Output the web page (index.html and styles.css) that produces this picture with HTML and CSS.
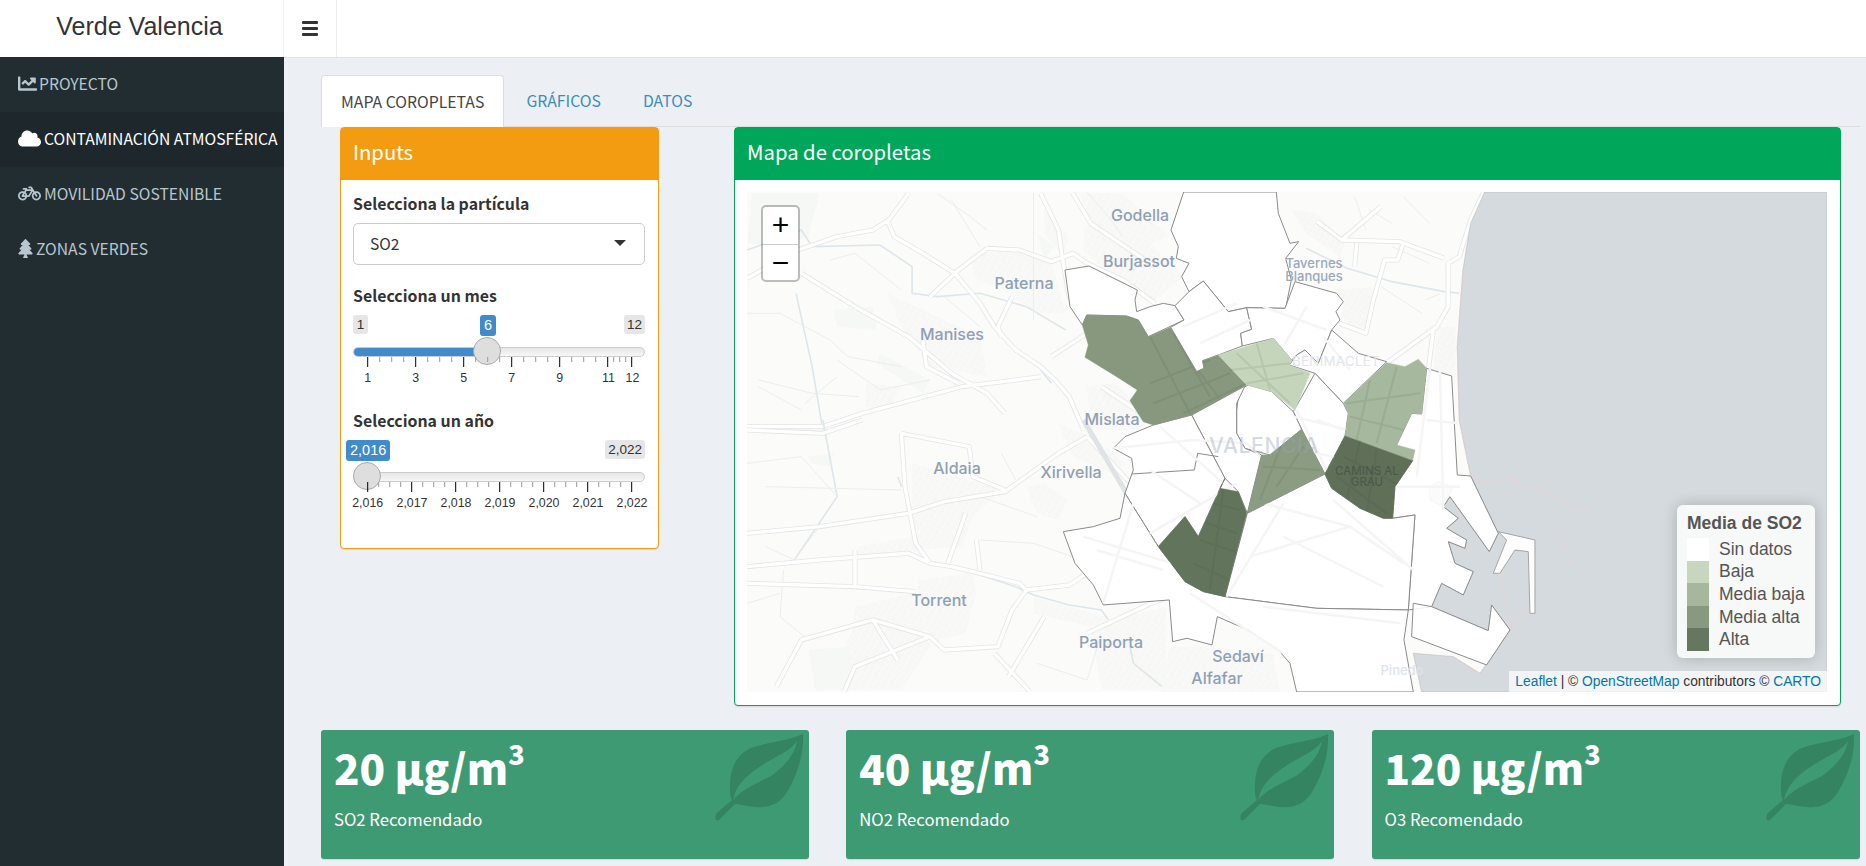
FILE: index.html
```html
<!DOCTYPE html>
<html lang="es">
<head>
<meta charset="utf-8">
<title>Verde Valencia</title>
<link rel="stylesheet" href="styles.css">
</head>
<body>
<header class="topbar">
  <div class="logo">Verde Valencia</div>
  <button class="toggle" aria-label="menu"><span></span><span></span><span></span></button>
</header>
<div class="shell">
  <aside class="sidebar">
    <a class="navitem"><svg class="ic ic-chart" viewBox="0 0 512 512"><path d="M496 384H64V80c0-8.840-7.160-16-16-16H16C7.160 64 0 71.160 0 80v336c0 17.670 14.330 32 32 32h464c8.840 0 16-7.160 16-16v-32c0-8.840-7.160-16-16-16zM464 96H345.940c-21.380 0-32.090 25.850-16.970 40.970l32.400 32.400L288 242.750l-73.370-73.370c-12.500-12.500-32.760-12.500-45.250 0l-68.690 68.690c-6.250 6.250-6.250 16.380 0 22.630l22.620 22.620c6.250 6.250 16.380 6.250 22.630 0L192 237.250l73.370 73.370c12.500 12.500 32.760 12.500 45.250 0l96-96 32.400 32.400c15.120 15.120 40.970 4.410 40.970-16.970V112c.01-8.840-7.150-16-16-16z"/></svg>PROYECTO</a>
    <a class="navitem active"><svg class="ic ic-wide" viewBox="0 0 640 512"><path d="M537.600 226.600c4.100-10.700 6.400-22.400 6.400-34.600 0-53-43-96-96-96-19.700 0-38.100 6-53.300 16.200C367 64.200 315.300 32 256 32c-88.400 0-160 71.600-160 160 0 2.700.1 5.400.2 8.100C40.200 219.800 0 273.200 0 336c0 79.500 64.500 144 144 144h368c70.700 0 128-57.300 128-128 0-61.900-44-113.600-102.400-125.400z"/></svg>CONTAMINACIÓN ATMOSFÉRICA</a>
    <a class="navitem"><svg class="ic ic-wide" viewBox="0 0 640 512"><path d="M512.509 192.001c-16.373-.064-32.030 2.955-46.436 8.495l-77.680-125.153A24 24 0 0 0 368.001 64h-64c-8.837 0-16 7.163-16 16v16c0 8.837 7.163 16 16 16h50.649l14.896 24H256.002v-16c0-8.837-7.163-16-16-16h-87.459c-13.441 0-24.777 10.999-24.536 24.437.232 13.044 10.876 23.563 23.995 23.563h48.726l-29.417 47.520c-13.433-4.830-27.904-7.483-42.992-7.520C58.094 191.830.412 249.012.002 319.236-.413 390.279 57.055 448 128.002 448c59.642 0 109.758-40.793 123.967-96h52.033a24 24 0 0 0 20.406-11.367L410.370 201.770l14.938 24.067c-25.455 23.448-41.385 57.081-41.307 94.437.145 68.833 57.899 127.051 126.729 127.719 70.606.685 128.181-55.803 129.255-125.996 1.086-70.941-56.526-129.720-127.476-129.996zM186.750 265.772c9.727 10.529 16.673 23.661 19.642 38.228h-43.306l23.664-38.228zM128.002 400c-44.112 0-80-35.888-80-80s35.888-80 80-80c5.869 0 11.585.653 17.099 1.859l-45.505 73.509C89.715 331.327 101.213 352 120.002 352h81.300c-12.370 28.225-40.562 48-73.300 48zm162.630-96h-35.624c-3.960-31.756-19.556-59.894-42.383-80.026L237.371 184h127.547l-74.286 120zm217.057 95.886c-41.036-2.165-74.049-35.692-75.627-76.755-.812-21.121 6.633-40.518 19.335-55.263l44.433 71.586c4.660 7.508 14.524 9.816 22.032 5.156l13.594-8.437c7.508-4.660 9.817-14.524 5.156-22.032l-44.468-71.643a79.901 79.901 0 0 1 19.858-2.497c44.112 0 80 35.888 80 80-.001 45.540-38.252 82.316-84.313 79.885z"/></svg>MOVILIDAD SOSTENIBLE</a>
    <a class="navitem"><svg class="ic ic-tree" viewBox="0 0 384 512"><path d="M378.310 378.490L298.420 288h30.630c9.010 0 16.980-5 20.780-13.060 3.800-8.040 2.550-17.260-3.280-24.050L268.420 160h28.890c9.100 0 17.300-5.350 20.860-13.610 3.520-8.130 1.860-17.590-4.240-24.080L203.660 4.830c-6.030-6.450-17.280-6.450-23.320 0L70.060 122.310c-6.100 6.490-7.750 15.950-4.240 24.080C69.380 154.650 77.590 160 86.690 160h28.890l-78.140 90.890c-5.810 6.780-7.060 15.990-3.270 24.040C37.970 283 45.930 288 54.950 288h30.630L5.690 378.490c-6 6.790-7.360 16.090-3.560 24.260 3.750 8.050 12 13.250 21 13.250H160v24.450l-30.290 48.400c-5.320 10.640 2.420 23.160 14.310 23.160h95.960c11.890 0 19.630-12.520 14.310-23.160L224 440.450V416h136.860c9 0 17.250-5.200 21-13.250 3.800-8.170 2.440-17.470-3.550-24.260z"/></svg>ZONAS VERDES</a>
  </aside>
  <main class="content">
    <nav class="tabs">
      <a class="tab current">MAPA COROPLETAS</a>
      <a class="tab">GRÁFICOS</a>
      <a class="tab">DATOS</a>
    </nav>
    <div class="toprow">
      <section class="box box-orange">
        <h3 class="box-title">Inputs</h3>
        <div class="box-body inputs">
          <label class="field-label">Selecciona la partícula</label>
          <div class="select"><span>SO2</span><i class="caret"></i></div>
          <label class="field-label label-mes">Selecciona un mes</label>
          <div class="slider">
            <span class="tag tag-min">1</span>
            <span class="tag tag-max">12</span>
            <span class="tag tag-val tag-6">6</span>
            <div class="track"><div class="fill"></div></div>
            <div class="handle handle-6"></div>
            <svg class="scale" viewBox="0 0 292 32">
              <path class="tk-min" d="M26.700 0v5M38.700 0v5M50.700 0v5M74.700 0v5M86.700 0v5M98.700 0v5M122.700 0v5M134.700 0v5M146.700 0v5M170.700 0v5M182.700 0v5M194.700 0v5M218.700 0v5M230.700 0v5M242.700 0v5M260.700 0v5M266.700 0v5M272.700 0v5"/>
              <path class="tk-maj" d="M14.700 0v10M62.700 0v10M110.700 0v10M158.700 0v10M206.700 0v10M254.700 0v10M278.700 0v10"/>
              <text x="14.700" y="25">1</text><text x="62.700" y="25">3</text><text x="110.700" y="25">5</text><text x="158.700" y="25">7</text><text x="206.700" y="25">9</text><text x="255.500" y="25">11</text><text x="279.500" y="25">12</text>
            </svg>
          </div>
          <label class="field-label label-ano">Selecciona un año</label>
          <div class="slider">
            <span class="tag tag-val tag-2016">2,016</span>
            <span class="tag tag-max">2,022</span>
            <div class="track"></div>
            <div class="handle handle-2016"></div>
            <svg class="scale scale-wide" viewBox="-8 0 308 32">
              <path class="tk-min" d="M25.700 0v5M36.700 0v5M47.700 0v5M69.700 0v5M80.700 0v5M91.700 0v5M113.700 0v5M124.700 0v5M135.700 0v5M157.700 0v5M168.700 0v5M179.700 0v5M201.700 0v5M212.700 0v5M223.700 0v5M245.700 0v5M256.700 0v5M267.700 0v5"/>
              <path class="tk-maj" d="M14.700 0v10M58.700 0v10M102.700 0v10M146.700 0v10M190.700 0v10M234.700 0v10M278.700 0v10"/>
              <text x="14.700" y="25">2,016</text><text x="59" y="25">2,017</text><text x="103" y="25">2,018</text><text x="147" y="25">2,019</text><text x="191" y="25">2,020</text><text x="235" y="25">2,021</text><text x="279" y="25">2,022</text>
            </svg>
          </div>
        </div>
      </section>
      <section class="box box-green">
        <h3 class="box-title">Mapa de coropletas</h3>
        <div class="box-body mapwrap">
          <div class="map">
            <svg class="mapsvg" viewBox="0 0 1080 500" width="1080" height="500">
              <defs>
                <pattern id="urb" width="17" height="17" patternUnits="userSpaceOnUse" patternTransform="rotate(28)"><path class="urbline" d="M0 0H17M0 6H17M0 12H17M0 0V17M8 0V17"/></pattern>
                <path id="r1" d="M48 295L190 210 300 170 400 150 445 120 500 40M440 120L460 170 540 220 630 280 700 370 740 440 800 510 870 560 910 600 950 650 990 750M720 205L810 210 900 245 960 220 1000 250 1100 300 1190 370M870 40L920 150 930 230 950 350 990 420M48 740L260 740 370 700 650 620 800 600 870 590M200 280L350 380 500 470 620 580 720 640 770 700M540 480L550 560 640 610M640 270L560 350M720 205L640 270M960 40L1010 130 1190 260M900 530L1000 460 1100 420M1040 620L1180 720M790 350L750 440 760 470"/>
                <path id="r2" d="M48 30L260 40 370 0M480 40L490 200 520 370 560 430 620 440 700 460 810 490 830 510 950 495 1000 460M48 440L250 420 500 400 560 430M48 340L250 320 500 280 600 245 770 215 920 100 1000 50M48 490L350 500 520 515M830 510L790 570 750 680 600 690 560 650 400 600 200 660 130 800M400 600L470 720M660 280L610 430M350 390V500M480 40L670 80 680 170 770 210M1000 640L1180 550 1230 530M690 360L700 450M560 650L350 740 320 815M740 700L840 815M880 590L780 770M1000 50L1130 200"/>
                <path id="r3" d="M545 37L510 120 480 230 450 250 450 380 420 440 290 545M100 125L165 180 320 185 440 235M205 190L200 260M330 190L315 240 280 240 250 360 230 460 160 430M165 180L270 80M410 450L395 590"/>
                <clipPath id="greens"><path d="M110 135L230 138 265 150 295 200 362 172 440 305 462 295 458 272 505 255 590 345 425 435 310 465 280 455 240 392 262 360 200 320 105 262 115 225 97 165zM505 255L670 205 725 270 718 285 780 310 735 420 665 365 590 345zM1010 278L1065 290 1105 268 1130 295 1115 432 1085 430 1040 525 1095 540 1088 572 885 498 895 430 885 405 880 400zM755 478L825 612 592 730 635 555 660 555zM885 498L1088 572 1035 650 1028 745 1000 745 930 715 845 655 825 612zM525 625L510 655 565 665 590 730 525 980 460 965 405 935 325 830 405 740 445 800z"/></clipPath>
              </defs>
              <rect class="land" width="1080" height="500"/>
              <g transform="translate(-17 -12) scale(.3571 .3333)">
                <path class="urban" d="M680 220L810 210 900 250 940 400 860 400 780 340 680 290zM440 340L700 470 720 590 560 560 470 420zM990 140L1090 100 1270 290 1180 370 1070 290 990 210zM980 40H1100L1230 170 1180 190 1020 150zM1000 620L1080 610 1180 720 1140 750H1010zM880 90L950 170 930 230 880 160zM380 610L480 620 440 690 380 680z"/>
                <path class="parkfield" d="M60 40L250 40 220 170 120 200 50 190zM290 390L400 380 410 450 300 440zM420 520L560 600 540 640 410 550zM860 160L910 200 880 240z"/>
                <path class="river" d="M48 210L200 150 230 200 420 195 510 260 510 340 580 350 700 340 830 380 940 450M185 340L230 560 260 750M870 570L900 610"/>
                <path class="field" d="M48 400L140 400 280 480 330 530 480 560M80 600L230 640 360 650M280 240L350 220 480 330M580 40L660 100 720 150M850 37V420M300 540L420 630 560 600M80 620L200 690M300 590L210 670M1000 37L1060 110 1100 170M620 60L700 200M600 350L700 440"/>
                <use class="casing" href="#r1"/>
                <use class="road" href="#r1"/>
              </g>
              <g transform="translate(-17 228) scale(.3571 .3333)">
                <path class="urban" d="M510 130L760 210 680 290 650 380 530 390 510 280zM830 200L880 190 945 240 920 300 860 280zM530 480L680 460 690 520 660 640 580 660 520 600zM350 560L510 520 560 680 480 810 260 810 340 640zM850 530L1050 590 1060 640 970 610 850 580zM1010 620L1220 560 1220 810H1040zM1230 680L1350 680 1520 700 1540 815H1210zM360 380L510 350 520 390 360 420zM920 10L1010 50 1110 130 1080 165 960 110z"/>
                <path class="parkfield" d="M220 690L330 680 350 790 240 815zM220 110L290 100 280 140 230 130z"/>
                <path class="river" d="M260 0L300 230 180 420M470 170L480 200M700 465L800 500 850 525 950 555 1040 570 1060 600M1120 680L1130 730 1210 800"/>
                <path class="field" d="M48 130L200 110 300 230M100 200L480 210M150 450L140 590 220 660M48 550L140 520M100 380L180 420 250 320M700 360L850 370 960 410M760 100L800 180M700 230L860 290M860 730L1000 780 1040 640"/>
                <use class="casing" href="#r2"/>
                <use class="road" href="#r2"/>
                <path class="rail" d="M990 0L1110 220"/>
              </g>
              <g transform="translate(533 -12) scale(.3737 .3333)">
                <path class="urban" d="M30 90L100 100 175 190 160 230 70 160zM160 330L250 320 230 470 170 420zM420 440L470 440 470 590 410 590z"/>
                <path class="river" d="M70 205L180 265 300 305 440 335 480 340"/>
                <path class="field" d="M200 50L230 150M330 50L400 130M240 90L300 130M300 200L400 250M270 320L380 400M390 360L430 340"/>
                <use class="casing" href="#r3"/>
                <use class="road" href="#r3"/>
              </g>
              <g transform="translate(303 78) scale(.3333)">
                <path class="sea" d="M1304 -234H2331V1266H1115L1090 1150 1210 1160 1290 1210 1380 1080 1325 1005 1315 1082 1145 1010 1175 940 1240 975 1270 905 1215 880 1195 815 1245 835 1250 810 1190 775 1225 745 1180 710 1200 680 1318 845 1345 790 1262 618 1228 450 1222 230 1239 0 1262 -140z"/>
                <path class="pier" d="M1345 785L1455 810 1455 1030 1440 1030 1435 845 1395 840 1350 910 1330 910 1370 810z"/>
                <path class="basin" d="M1140 690L1140 650 1165 635 1210 650 1195 680 1170 705z"/>
                <path class="foam" d="M1262 618L1300 640 1390 625M1390 630L1630 730M1530 790L1565 880M1480 880L1460 880M1290 1210L1240 1190M1222 230L1228 450 1262 618M1239 0L1222 230M1380 1080L1420 1020M1350 910L1370 1000"/>
                <g class="district">
                  <path class="d0" d="M401 -234L363 -120 385 -70 379 -35 417 -20 395 20 417 65 460 33 535 125 590 113 707 115 724 30 707 -35 746 -85 720 -80 685 -170 679 -234z"/>
                  <path class="d0" d="M45 0L60 110 97 165 110 135 230 138 265 150 295 200 402 150 375 107 340 100 300 110 260 125 255 90 262 60 117 -12z"/>
                  <path class="d0" d="M375 107L402 150 362 172 440 305 462 295 458 272 505 255 577 228 572 190 605 178 590 113 535 125 460 33 417 65z"/>
                  <path class="d0" d="M590 113L705 115 735 35 860 70 880 95 858 125 870 150 845 180 805 280 765 240 740 255 725 270 670 205 577 228 572 190 605 178z"/>
                  <path class="d0" d="M845 180L925 250 1010 275 880 400 795 310 718 285 740 255 765 240 805 280z"/>
                  <path class="d0" d="M1130 295L1205 318 1222 615 1262 618 1345 790 1318 845 1200 680 1180 710 1225 745 1190 775 1250 810 1245 835 1195 815 1215 880 1270 905 1240 975 1175 940 1145 1010 1075 1020 1095 735 1028 745 1035 650 1088 572 1040 525 1085 430 1115 432z"/>
                  <path class="d0" d="M795 310L880 400 895 430 885 498 825 612 755 478 730 425z"/>
                  <path class="d0" d="M568 360L595 345 665 365 730 425 755 478 660 555 585 535 560 490 560 420z"/>
                  <path class="d0" d="M425 435L585 348 560 400 560 490 585 535 635 555 592 730 565 665 525 625z"/>
                  <path class="d0" d="M310 465L425 435 525 625 510 655 445 800 405 740 325 830 225 670 250 600 245 565 190 535 225 500z"/>
                  <path class="inner" d="M245 612L433 600 443 550 505 560"/>
                  <path class="d0" d="M525 980L592 730 825 612 845 655 930 715 1000 745 1028 745 1095 735 1075 1020 800 1015z"/>
                  <path class="d0" d="M40 785L130 770 210 745 225 670 325 830 405 935 460 965 525 980 800 1015 1075 1020 1062 1110 1090 1266H740L720 1180 685 1140 594 1080 502 1040 486 1125 411 1105 368 1115 358 990 160 1005 130 945 75 880z"/>
                  <path class="d0" d="M1145 1010L1315 1082 1325 1005 1380 1080 1310 1185 1085 1100 1090 1000z"/>
                </g>
                <path class="street" d="M190 535L430 510 590 520 630 560M330 470L520 640M560 640L300 790M640 700L900 770 1060 880M600 860L900 770M530 980L700 700M740 420L830 600M800 450L880 480M1130 450L1225 460M1140 295L1100 620M1170 300L1180 720M1040 650L1230 650M850 690L1090 900M700 800L1000 950M400 170L560 100M450 220L600 150M640 110L830 180M770 110L700 230M820 200L900 300M300 600L450 700M400 890L100 800M250 700L160 1000M140 840L340 900M640 1010L1050 1060M420 970L700 1150M730 440L900 480M760 540L890 570"/>
                <path class="d1" d="M110 135L230 138 265 150 295 200 362 172 440 305 462 295 458 272 505 255 590 345 425 435 310 465 280 455 240 392 262 360 200 320 105 262 115 225 97 165z"/>
                <path class="d2" d="M505 255L670 205 725 270 718 285 780 310 735 420 665 365 590 345z"/>
                <path class="d3" d="M1010 278L1065 290 1105 268 1130 295 1115 432 1085 430 1040 525 1095 540 1088 572 885 498 895 430 885 405 880 400z"/>
                <path class="d1 d1b" d="M755 478L825 612 592 730 635 555 660 555z"/>
                <path class="d4" d="M885 498L1088 572 1035 650 1028 745 1000 745 930 715 845 655 825 612z"/>
                <path class="d4 d4b" d="M525 625L510 655 565 665 590 730 525 980 460 965 405 935 325 830 405 740 445 800z"/>
                <path class="streetdark" d="M300 200L420 430M370 190L480 380M420 270L520 400M300 340L480 270M310 400L540 310M400 430L590 340M560 250L720 400M620 220L660 360M540 300L720 280M590 340L760 310M900 440L1100 490M960 330L920 510M1040 290L980 520M890 400L1110 370M640 590L810 600M700 510L630 690M760 530L680 650M880 560L1040 640M930 510L890 690M980 540L950 730M860 620L1010 730M490 700L570 720M520 660L480 960M450 810L570 850M430 880L540 930M470 760L560 790"/>
                <text class="lbl-city" x="642" y="549">VALENCIA</text>
              </g>
              <text class="lbl" x="393" y="29">Godella</text>
              <text class="lbl" x="392" y="75">Burjassot</text>
              <text class="lbl" x="277" y="97">Paterna</text>
              <text class="lbl" x="205" y="148">Manises</text>
              <text class="lbl" x="365" y="233">Mislata</text>
              <text class="lbl" x="210" y="282">Aldaia</text>
              <text class="lbl" x="324" y="286">Xirivella</text>
              <text class="lbl" x="192" y="414">Torrent</text>
              <text class="lbl" x="364" y="456">Paiporta</text>
              <text class="lbl" x="491" y="470">Sedaví</text>
              <text class="lbl" x="470" y="492">Alfafar</text>
              <text class="lbl lbl-xs" x="567" y="76">Tavernes</text>
              <text class="lbl lbl-xs" x="567" y="89">Blanques</text>
              <text class="lbl-hood" x="589" y="174">BENIMACLET</text>
              <text class="lbl-dark" x="620" y="283">CAMINS AL</text>
              <text class="lbl-dark" x="620" y="294">GRAU</text>
              <text class="lbl-pale" x="655" y="483">Pinedo</text>
            </svg>
            <div class="zoomctl"><a class="zoombtn">+</a><a class="zoombtn">−</a></div>
            <div class="legend">
              <div class="legend-title">Media de SO2</div>
              <div class="legend-row"><i class="sw sw0"></i><span>Sin datos</span></div>
              <div class="legend-row"><i class="sw sw1"></i><span>Baja</span></div>
              <div class="legend-row"><i class="sw sw2"></i><span>Media baja</span></div>
              <div class="legend-row"><i class="sw sw3"></i><span>Media alta</span></div>
              <div class="legend-row"><i class="sw sw4"></i><span>Alta</span></div>
            </div>
            <div class="attrib"><a>Leaflet</a> | © <a>OpenStreetMap</a> contributors © <a>CARTO</a></div>
          </div>
        </div>
      </section>
    </div>
    <div class="values">
      <div class="valuebox">
        <h3 class="val">20 µg/m<sup>3</sup></h3>
        <p class="valsub">SO2 Recomendado</p>
        <svg class="leaf" viewBox="0 0 88 87"><path fill-rule="evenodd" d="M88 0C70 8 52 8 36 14C22 20 14 34 15 57C15 62 16 64 17 66L2 79C0 82 0 85 1 86C3 87 4 86 6 84L20 70C30 71 38 74 48 73C60 72 67 66 72 58C82 42 88 22 88 6ZM18 66C22 50 30 42 52 28C66 20 76 16 82 7C80 20 70 32 56 42C40 50 26 56 18 66Z"/></svg>
      </div>
      <div class="valuebox">
        <h3 class="val">40 µg/m<sup>3</sup></h3>
        <p class="valsub">NO2 Recomendado</p>
        <svg class="leaf" viewBox="0 0 88 87"><path fill-rule="evenodd" d="M88 0C70 8 52 8 36 14C22 20 14 34 15 57C15 62 16 64 17 66L2 79C0 82 0 85 1 86C3 87 4 86 6 84L20 70C30 71 38 74 48 73C60 72 67 66 72 58C82 42 88 22 88 6ZM18 66C22 50 30 42 52 28C66 20 76 16 82 7C80 20 70 32 56 42C40 50 26 56 18 66Z"/></svg>
      </div>
      <div class="valuebox">
        <h3 class="val">120 µg/m<sup>3</sup></h3>
        <p class="valsub">O3 Recomendado</p>
        <svg class="leaf" viewBox="0 0 88 87"><path fill-rule="evenodd" d="M88 0C70 8 52 8 36 14C22 20 14 34 15 57C15 62 16 64 17 66L2 79C0 82 0 85 1 86C3 87 4 86 6 84L20 70C30 71 38 74 48 73C60 72 67 66 72 58C82 42 88 22 88 6ZM18 66C22 50 30 42 52 28C66 20 76 16 82 7C80 20 70 32 56 42C40 50 26 56 18 66Z"/></svg>
      </div>
    </div>
  </main>
</div>
</body>
</html>
```
FILE: styles.css
```css
* { box-sizing: border-box; }
html, body { margin: 0; padding: 0; height: 866px; overflow: hidden; }
body {
  font-family: "Noto Sans CJK SC", "Source Sans Pro", "Noto Sans", sans-serif;
  font-size: 16px;
  color: #333;
  background: #ecf0f5;
  display: flex;
  flex-direction: column;
}

/* top bar */
.topbar {
  height: 58px;
  flex: none;
  display: flex;
  background: #fff;
  border-bottom: 1px solid #dfe3e8;
}
.logo {
  width: 284px;
  height: 57px;
  padding-right: 4px;
  text-align: center;
  font: 25px/52px "Liberation Sans", Arial, sans-serif;
  color: #333;
  border-right: 1px solid #eee;
}
.toggle {
  width: 53px;
  height: 57px;
  padding: 0;
  background: #fff;
  border: 0;
  border-right: 1px solid #eee;
  display: flex;
  flex-direction: column;
  align-items: center;
  justify-content: center;
  gap: 3.5px;
}
.toggle span { display: block; width: 16px; height: 2.5px; background: #333; border-radius: 1px; }

/* shell */
.shell { flex: 1; display: flex; min-height: 0; margin-top: -1px; }
.sidebar { width: 284px; flex: none; background: #222d32; }
.navitem {
  height: 55px;
  display: flex;
  align-items: center;
  padding: 0 0 3px 18px;
  color: #b8c7ce;
  font-size: 15.7px;
  white-space: nowrap;
}
.navitem.active { background: #1e282c; color: #fff; }
.ic { fill: currentColor; height: 19px; flex: none; margin-right: 3px; }
.ic-chart { width: 19px; margin-right: 2px; }
.ic-wide { width: 23px; }
.ic-tree { width: 15px; }

.content { flex: 1; min-width: 0; padding: 18px 6px 0 37px; }

/* tabs */
.tabs { display: flex; height: 52px; border-bottom: 1px solid #ddd; }
.tab {
  height: 52px;
  margin-left: 2px;
  padding: 0 20px;
  line-height: 51px;
  font-size: 15.8px;
  color: #3c8dbc;
}
.tab.current {
  margin-left: 0;
  padding: 0 19px;
  background: #fff;
  color: #444;
  border: 1px solid #ddd;
  border-bottom: 0;
  border-radius: 4px 4px 0 0;
}

/* boxes */
.toprow { display: flex; align-items: flex-start; margin-left: 19px; }
.box { background: #fff; border-radius: 4px; border: 1px solid; box-shadow: 0 1px 1px rgba(0,0,0,.1); }
.box-orange { width: 319px; height: 422px; border-color: #f39c12; }
.box-green { width: 1107px; height: 579px; margin-left: 75px; border-color: #00a65a; }
.box-title {
  margin: 0;
  height: 52px;
  padding: 0 12px;
  font-size: 20.3px;
  font-weight: 400;
  line-height: 47px;
  color: #fff;
}
.box-orange .box-title { background: #f39c12; }
.box-green .box-title { background: #00a65a; }
.box-body { padding: 12px; }

/* inputs */
.inputs { display: flex; flex-direction: column; padding-right: 13px; }
.field-label { font-weight: 700; font-size: 15.9px; line-height: 24px; height: 24px; color: #333; }
.select {
  margin-top: 7px;
  height: 42px;
  padding: 0 16px 3px;
  border: 1px solid #ccc;
  border-radius: 5px;
  display: flex;
  align-items: center;
  justify-content: space-between;
  font-size: 15.6px;
}
.caret { border: 6px solid transparent; border-top: 6px solid #333; border-bottom: 0; margin-right: 2px; }
.label-mes { margin-top: 19px; }
.label-ano { margin-top: 30px; }

.slider { position: relative; width: 292px; height: 64px; margin-top: 7px; }
.tag {
  position: absolute;
  top: 0;
  height: 19px;
  min-width: 15px;
  padding: 0 3px;
  text-align: center;
  border-radius: 3px;
  background: #e6e6e6;
  font: 13.5px/19px "Liberation Sans", Arial, sans-serif;
  color: #333;
}
.tag-min { left: 0; }
.tag-max { right: 0; }
.tag-val { height: 21px; padding: 0 4px; background: #428bca; color: #fff; line-height: 20px; font-size: 14.5px; }
.tag-6 { left: 127px; }
.tag-2016 { left: -7px; }
.track {
  position: absolute;
  left: 0; right: 0; top: 32px;
  height: 10px;
  border-radius: 5px;
  border: 1px solid #ccc;
  background: linear-gradient(#e6e6e6, #f7f7f7);
  overflow: hidden;
}
.fill { width: 45%; height: 100%; margin-top: -1px; min-height: 10px; background: #428bca; }
.handle {
  position: absolute;
  top: 22px;
  width: 28px; height: 28px;
  border-radius: 50%;
  background: #dedede;
  border: 1px solid #aaa;
}
.handle-6 { left: 120px; }
.handle-2016 { left: 0; }
.scale { position: absolute; left: 0; top: 42px; width: 292px; height: 32px; overflow: visible; }
.scale-wide { left: -8px; width: 308px; }
.scale text { font: 12.4px "Liberation Sans", Arial, sans-serif; fill: #333; text-anchor: middle; }
.tk-maj { stroke: #000; stroke-width: 1; fill: none; }
.tk-min { stroke: #999; stroke-width: 1; fill: none; }

/* map */
.mapwrap { padding: 12px; }
.map { position: relative; width: 1080px; height: 500px; overflow: hidden; background: #fafafa; }
.mapsvg { display: block; }
.mapsvg path { vector-effect: non-scaling-stroke; fill: none; }
.land { fill: #fbfbfa; }
.mapsvg .sea { fill: #d4dadd; stroke: #bbb; stroke-width: .6; }
.mapsvg .pier { fill: #fdfdfd; stroke: #a5a5a5; stroke-width: 1; }
.mapsvg .basin { fill: #d4dadd; stroke: #aaa; stroke-width: .8; }
.mapsvg .foam { stroke: #eccfd0; stroke-width: 1.4; stroke-dasharray: 2 2; }
.mapsvg .urban { fill: url(#urb); }
.mapsvg .urbline { stroke: #e8e9e9; stroke-width: .8; }
.mapsvg .parkfield { fill: #f6f8f6; }
.mapsvg .river { stroke: #dde6ea; stroke-width: 1.6; }
.mapsvg .field { stroke: #ededeb; stroke-width: 1; }
.casing { stroke: #e4e5e5; stroke-width: 5; stroke-linejoin: round; }
.road { stroke: #ffffff; stroke-width: 3.4; stroke-linejoin: round; }
.mapsvg .rail { stroke: #dfe3e6; stroke-width: 5; }
.mapsvg .d0 { fill: #fff; fill-opacity: .88; stroke: #8b8b8b; stroke-width: 1; }
.mapsvg .inner { stroke: #8b8b8b; stroke-width: 1; }
.mapsvg .street { stroke: #f5f5f5; stroke-width: 2.5; }
.mapsvg .d1 { fill: #87987f; stroke: #87987f; stroke-width: .5; }
.mapsvg .d1b { fill: #8b9c83; }
.mapsvg .d2 { fill: #c5d5bc; stroke: #c5d5bc; stroke-width: .5; }
.mapsvg .d3 { fill: #a6b89e; stroke: #a6b89e; stroke-width: .5; }
.mapsvg .d4 { fill: #5f6f58; stroke: #5f6f58; stroke-width: .5; }
.mapsvg .d4b { fill: #63745c; }
.mapsvg .streetdark { stroke: rgba(55,70,50,.1); stroke-width: 2; clip-path: url(#greens); }
.lbl { font: 500 16px Inter, "Noto Sans", sans-serif; fill: #8f9fb4; text-anchor: middle; }
.lbl-xs { font-size: 13px; fill: #9aa9bb; }
.lbl-city { font: 500 63px Inter, "Noto Sans", sans-serif; fill: rgba(150,165,185,.42); text-anchor: middle; letter-spacing: 2px; }
.lbl-hood { font: 400 13.3px Inter, "Noto Sans", sans-serif; fill: #e2e5ea; text-anchor: middle; letter-spacing: .3px; }
.lbl-dark { font: 400 11.6px Inter, "Noto Sans", sans-serif; fill: #4a5748; text-anchor: middle; }
.lbl-pale { font: 500 13px Inter, "Noto Sans", sans-serif; fill: #dfe3e8; text-anchor: middle; }

.zoomctl {
  position: absolute;
  left: 14px; top: 13px;
  width: 39px; height: 77px;
  border: 2px solid rgba(0,0,0,.25);
  border-radius: 5px;
  background: #fff;
  background-clip: padding-box;
  overflow: hidden;
}
.zoombtn {
  display: block;
  height: 36.5px;
  text-align: center;
  font: 400 30px/35px "Liberation Sans", Arial, sans-serif;
  color: #000;
}
.zoombtn + .zoombtn { border-top: 1px solid #ccc; }

.legend {
  position: absolute;
  left: 930px; top: 313px;
  width: 138px; height: 153px;
  padding: 9px 10px;
  border-radius: 6px;
  background: rgba(255,255,255,.8);
  box-shadow: 0 0 15px rgba(0,0,0,.2);
  font: 17.5px "Liberation Sans", Arial, sans-serif;
  color: #555;
}
.legend-title { font-weight: 700; height: 24px; line-height: 19px; }
.legend-row { display: flex; align-items: center; height: 22.6px; white-space: nowrap; }
.sw { width: 22px; height: 22.6px; margin-right: 10px; flex: none; }
.sw0 { background: #fff; }
.sw1 { background: #c7d6bd; }
.sw2 { background: #a6b79e; }
.sw3 { background: #88997f; }
.sw4 { background: #66775f; }

.attrib {
  position: absolute;
  right: 0; bottom: 0;
  height: 21px;
  padding: 0 6px;
  background: rgba(255,255,255,.7);
  font: 13.8px/21px "Liberation Sans", Arial, sans-serif;
  color: #333;
  white-space: nowrap;
}
.attrib a { color: #0078a8; }

/* value boxes */
.values { display: flex; gap: 37.25px; margin-top: 24px; }
.valuebox {
  position: relative;
  width: 488px;
  height: 129px;
  padding: 11px 13px;
  border-radius: 3px;
  background: #3e9a72;
  color: #fff;
  box-shadow: 0 1px 1px rgba(0,0,0,.1);
  overflow: hidden;
}
.val { margin: 0; font-size: 42px; font-weight: 900; line-height: 52px; white-space: nowrap; }
.val sup { font-size: 27px; line-height: 0; vertical-align: baseline; position: relative; top: -20px; }
.valsub { margin: 14px 0 0; font-size: 16.7px; line-height: 24px; }
.leaf { position: absolute; right: 6px; top: 4px; width: 88px; height: 87px; fill: rgba(0,0,0,.15); }
```
